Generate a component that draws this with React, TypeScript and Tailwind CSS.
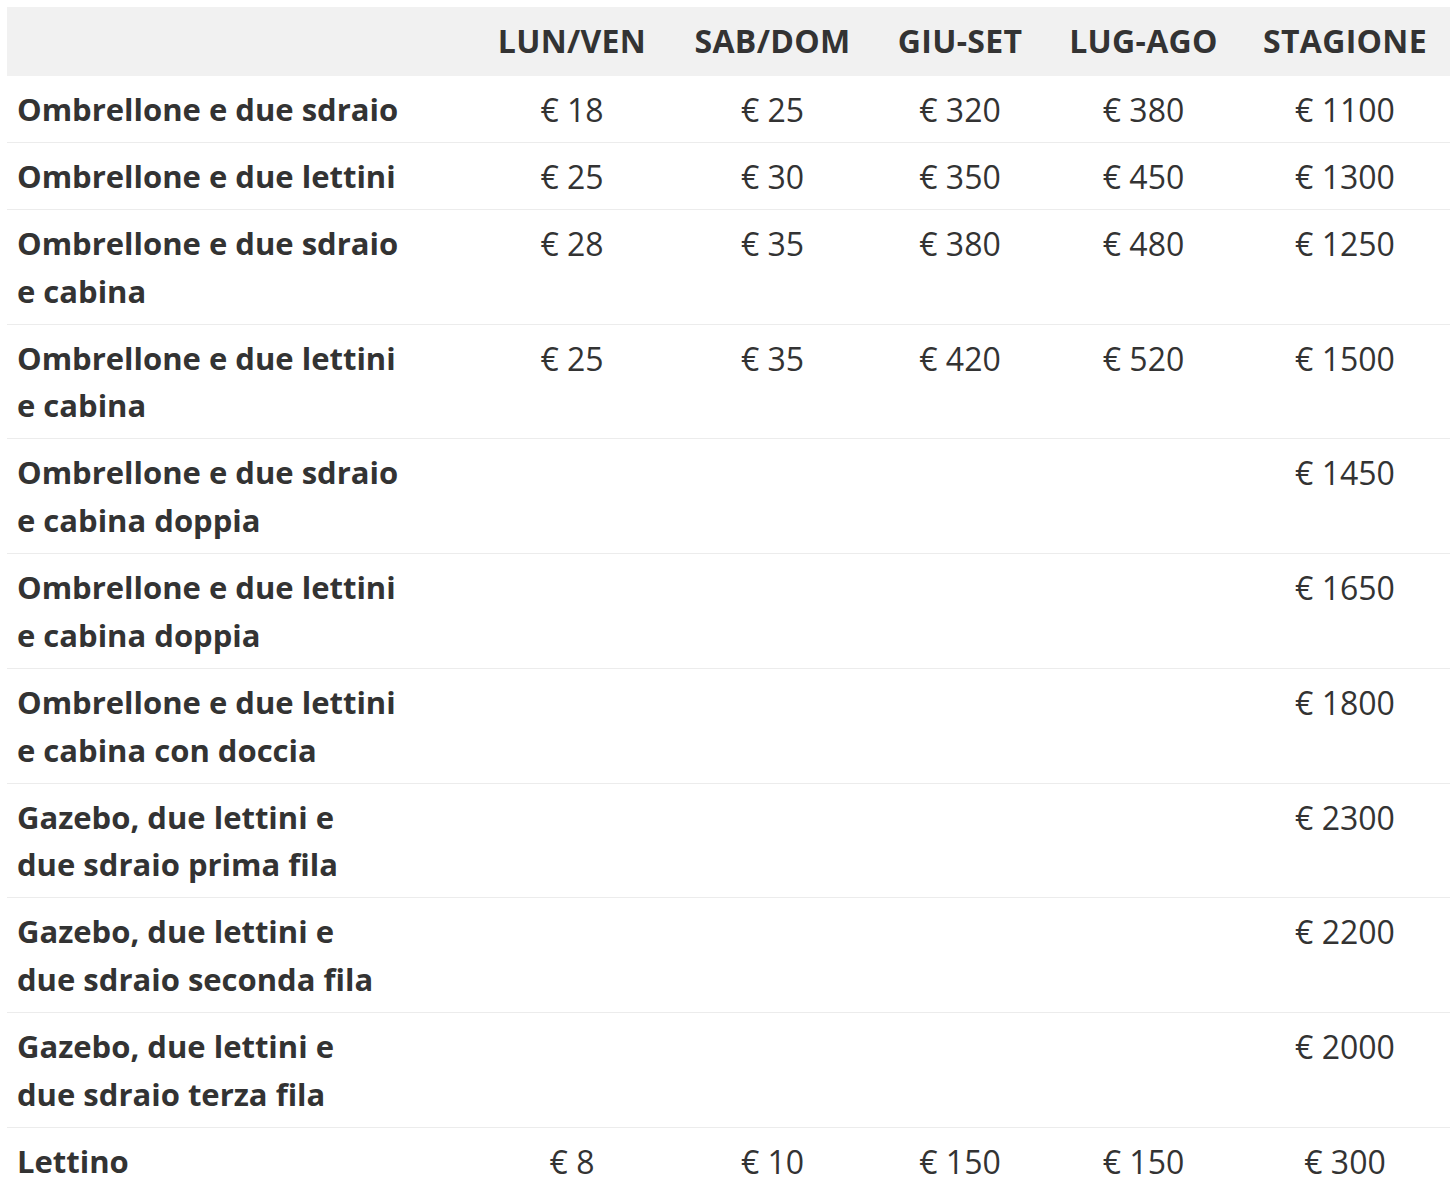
import React from "react";

type Row = { label: string[]; v: string[] };

const rows: Row[] = [
  { label: ["Ombrellone e due sdraio"], v: ["€ 18", "€ 25", "€ 320", "€ 380", "€ 1100"] },
  { label: ["Ombrellone e due lettini"], v: ["€ 25", "€ 30", "€ 350", "€ 450", "€ 1300"] },
  { label: ["Ombrellone e due sdraio", "e cabina"], v: ["€ 28", "€ 35", "€ 380", "€ 480", "€ 1250"] },
  { label: ["Ombrellone e due lettini", "e cabina"], v: ["€ 25", "€ 35", "€ 420", "€ 520", "€ 1500"] },
  { label: ["Ombrellone e due sdraio", "e cabina doppia"], v: ["", "", "", "", "€ 1450"] },
  { label: ["Ombrellone e due lettini", "e cabina doppia"], v: ["", "", "", "", "€ 1650"] },
  { label: ["Ombrellone e due lettini", "e cabina con doccia"], v: ["", "", "", "", "€ 1800"] },
  { label: ["Gazebo, due lettini e", "due sdraio prima fila"], v: ["", "", "", "", "€ 2300"] },
  { label: ["Gazebo, due lettini e", "due sdraio seconda fila"], v: ["", "", "", "", "€ 2200"] },
  { label: ["Gazebo, due lettini e", "due sdraio terza fila"], v: ["", "", "", "", "€ 2000"] },
  { label: ["Lettino"], v: ["€ 8", "€ 10", "€ 150", "€ 150", "€ 300"] },
];

const heads = ["LUN/VEN", "SAB/DOM", "GIU-SET", "LUG-AGO", "STAGIONE"];

export default function App() {
  return (
    <div
      className="bg-white min-h-[1200px] pt-[7px] pl-[7px] text-[#333333]"
      style={{ fontFamily: '"Open Sans", "Noto Sans", sans-serif' }}
    >
      <table className="table-fixed border-collapse w-[1443px] text-[32px] leading-[47.75px]">
        <colgroup>
          <col className="w-[465px]" />
          <col className="w-[200px]" />
          <col className="w-[201px]" />
          <col className="w-[174px]" />
          <col className="w-[193px]" />
          <col className="w-[210px]" />
        </colgroup>
        <thead>
          <tr className="bg-[#f1f1f1]">
            <th className="pt-[10px] pb-[11px]"></th>
            {heads.map((h) => (
              <th
                key={h}
                className="pt-[10px] pb-[11px] text-center font-bold whitespace-nowrap tracking-[0.3px]"
              >
                {h}
              </th>
            ))}
          </tr>
        </thead>
        <tbody>
          {rows.map((r, i) => (
            <tr key={i} className={i < rows.length - 1 ? "border-b border-[#ececec]" : ""}>
              <td className="align-top pl-[10px] pt-[10px] pb-[8.25px] font-bold text-[31px]">
                {r.label.map((l, j) => (
                  <div key={j} className="whitespace-nowrap">
                    {l}
                  </div>
                ))}
              </td>
              {r.v.map((v, j) => (
                <td
                  key={j}
                  className="align-top text-center pt-[10px] pb-[8.25px] font-normal whitespace-nowrap"
                >
                  {v}
                </td>
              ))}
            </tr>
          ))}
        </tbody>
      </table>
    </div>
  );
}
